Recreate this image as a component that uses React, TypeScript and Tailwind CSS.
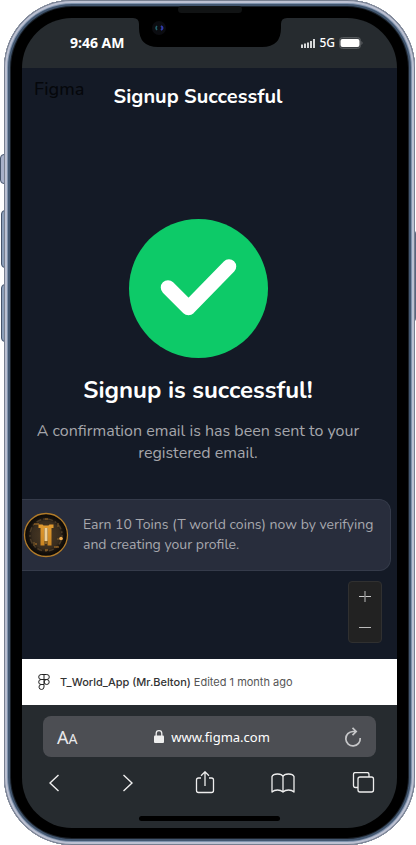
import React from "react";

function StatusBar() {
  return (
    <div className="relative flex h-[50px] items-center justify-between bg-[#262b2f] pl-12 pr-[34px] text-white">
      <span className="font-['Noto_Sans','Open_Sans',sans-serif] text-sm font-bold leading-5">9:46 AM</span>
      <div className="flex items-center gap-1">
        <svg viewBox="0 0 14 9" className="h-[9px] w-[14px]" fill="#d5d7d8" aria-hidden="true">
          <rect x="0" y="5.500" width="2" height="3.500" />
          <rect x="3" y="4.500" width="2" height="4.500" />
          <rect x="6" y="3.500" width="2" height="5.500" />
          <rect x="9" y="2" width="2" height="7" />
          <rect x="12" y="0" width="2" height="9" />
        </svg>
        <span className="font-['Noto_Sans','Open_Sans',sans-serif] text-xs font-medium leading-5">5G</span>
        <svg viewBox="0 0 24 12" className="h-3 w-6" aria-hidden="true">
          <rect x="0.5" y="0.5" width="21" height="11" rx="3" fill="#3a3e42" stroke="#55595c" />
          <rect x="1.500" y="2" width="19" height="8" rx="2" fill="#fff" />
          <path d="M22.500 4v4q1-1 1-2t-1-2" fill="#6a6d70" />
        </svg>
      </div>
      <svg viewBox="0 0 154 42" className="absolute -top-3 left-1/2 h-[42px] w-[154px] -translate-x-1/2" aria-hidden="true">
        <path d="M0 0H154V12Q148 12 148 18V22Q148 41 129 41H25Q6 41 6 22V18Q6 12 0 12Z" fill="#000" />
        <circle cx="26" cy="22" r="7" fill="#0b0c10" />
        <path d="M24 20q-2 2 0 4" stroke="#23606a" strokeWidth="1.500" fill="none" />
        <path d="M28 20q3 2 0 4" stroke="#303bac" strokeWidth="2" fill="none" />
      </svg>
    </div>
  );
}

function Coin() {
  return (
    <svg viewBox="0 0 46 46" className="h-[46px] w-[46px] shrink-0" role="img" aria-label="Toin">
      <defs>
        <radialGradient id="coin">
          <stop offset="0" stopColor="#4d3b25" />
          <stop offset="0.65" stopColor="#382c1e" />
          <stop offset="0.8" stopColor="#17120d" />
          <stop offset="1" stopColor="#080604" />
        </radialGradient>
        <linearGradient id="gold" x2="0" y2="1">
          <stop offset="0" stopColor="#e09a30" />
          <stop offset="1" stopColor="#c98522" />
        </linearGradient>
      </defs>
      <circle cx="23" cy="23" r="21.500" fill="url(#coin)" stroke="#b17b29" strokeWidth="1.300" />
      <circle cx="23" cy="23" r="16" fill="none" stroke="#4a3a26" strokeWidth="1.500" strokeDasharray="2 3 5 2" />
      <path d="M15.500 12.500h4l1 1h5l1-1h4v3.500h-2v17.500h-4V16h-3v17.500h-4V16h-2z" fill="url(#gold)" />
      <path d="M21.500 16h3v13h-3z" fill="#edcf96" />
      <path d="M21.500 29h3v3h-3z" fill="#8a6428" />
      <path d="M11 12h5M12 32h2M31 35h5M22 38h3M22 7h3" stroke="#b57928" />
      <path d="M11 30v4M35 11v4M34 27h6" stroke="#84602d" />
      <circle cx="38" cy="26.500" r="1.800" fill="#f0ad50" />
    </svg>
  );
}

function SuccessPage() {
  return (
    <main className="relative bg-[#141a26] font-['Nunito','Noto_Sans',sans-serif]">
      <span className="absolute left-3 top-[9px] text-lg font-medium leading-6 text-[#05070b]">Figma</span>
      <div className="pr-[23px] text-center">
        <h1 className="pt-[17px] text-xl font-bold leading-6 text-white">Signup Successful</h1>
        <svg viewBox="0 0 139 139" className="mx-auto mt-[110px] h-[139px] w-[139px]" role="img" aria-label="Success">
          <circle cx="69.500" cy="69.500" r="69.500" fill="#0dca68" />
          <path d="M39 68.500 59.500 89 100 47.500" fill="none" stroke="#fff" strokeWidth="14.500" strokeLinecap="round" strokeLinejoin="round" />
        </svg>
        <h2 className="mt-4 text-2xl font-bold leading-8 text-white">Signup is successful!</h2>
        <p className="mx-auto mt-[14px] max-w-[344px] text-base leading-[22px] text-[#a5a6ab]">
          A confirmation email is has been sent to your registered email.
        </p>
      </div>
      <section className="mr-[6px] mt-[35px] flex items-center gap-[14px] rounded-r-xl border-y border-r border-[#353b4a] bg-[#282d3c] py-3 pl-px pr-4">
        <Coin />
        <p className="text-sm leading-5 text-[#a7a8ae]">Earn 10 Toins (T world coins) now by verifying and creating your profile.</p>
      </section>
      <div className="flex justify-end pb-4 pr-[15px] pt-[10px]">
        <div className="flex w-[34px] flex-col rounded border border-[#303030] bg-[#222222]">
          <button type="button" aria-label="Zoom in" className="flex h-[30px] items-center justify-center">
            <svg viewBox="0 0 12 12" className="h-3 w-3" stroke="#ccc" aria-hidden="true"><path d="M0 5.500h12" /><path d="M6 0v11" stroke="#888" strokeWidth="1.500" /></svg>
          </button>
          <button type="button" aria-label="Zoom out" className="flex h-[30px] items-center justify-center">
            <svg viewBox="0 0 12 12" className="h-3 w-3" stroke="#bbb" aria-hidden="true"><path d="M0 6.500h12" /></svg>
          </button>
        </div>
      </div>
    </main>
  );
}

function FileBar() {
  return (
    <div className="flex h-[46px] items-center bg-white pl-4 font-['Inter',sans-serif] text-[11px] leading-4 text-[#333]">
      <svg viewBox="0 0 12 16" className="mr-[10px] h-4 w-3" fill="none" stroke="#222" aria-hidden="true">
        <path d="M6 .5H3.200a2.500 2.500 0 0 0 0 5H6zM6 .5h2.800a2.500 2.500 0 0 1 0 5H6M6 5.500H3.200a2.500 2.500 0 0 0 0 5H6zM6 10.500H3.200A2.500 2.500 0 1 0 6 13z" />
        <circle cx="8.700" cy="8" r="2.500" />
      </svg>
      <span className="font-medium">T_World_App (Mr.Belton)</span>
      <span className="ml-[3px] text-[#555]">Edited 1 month ago</span>
    </div>
  );
}

function BrowserBar() {
  return (
    <footer className="bg-[#262b2f] pb-[7px] pt-[11px] text-white">
      <div className="mx-[21px] flex h-[41px] items-center justify-between rounded-lg bg-[#4c4e53] px-[14px] font-['Noto_Sans',sans-serif]">
        <button type="button" aria-label="Text size" className="leading-6 text-[#e8e8ea]">
          <span className="text-lg">A</span><span className="text-sm">A</span>
        </button>
        <label className="ml-[6px] flex items-center gap-[7px]">
          <svg viewBox="0 0 10 13" className="h-[13px] w-[10px]" aria-hidden="true">
            <rect y="5.500" width="10" height="7.500" rx="1" fill="#eee" />
            <path d="M2.200 6V3.500a2.800 2.800 0 0 1 5.600 0V6" fill="none" stroke="#eee" strokeWidth="1.300" />
          </svg>
          <input type="text" aria-label="Address" defaultValue="www.figma.com" className="w-[102px] bg-transparent text-[13px] leading-5 outline-none" />
        </label>
        <button type="button" aria-label="Reload">
          <svg viewBox="0 0 18 20" className="h-5 w-[18px]" fill="none" stroke="#c6c7c9" strokeWidth="1.700" aria-hidden="true">
            <path d="M12 4.500H9A7.200 7.200 0 1 0 16.200 11M8.500 .8l3.700 3.700L8.500 8.200" />
          </svg>
        </button>
      </div>
      <nav aria-label="Browser" className="mt-3 flex h-7 items-center justify-between pl-[27px] pr-[22px]">
        <button type="button" aria-label="Back" className="mr-[8px]">
          <svg viewBox="0 0 10 18" className="h-[18px] w-[10px]" fill="none" stroke="#eee" strokeWidth="1.400" aria-hidden="true"><path d="M9.500 1 1 9l8.500 8" /></svg>
        </button>
        <button type="button" aria-label="Forward" className="mr-[6px]">
          <svg viewBox="0 0 10 18" className="h-[18px] w-[10px]" fill="none" stroke="#eee" strokeWidth="1.400" aria-hidden="true"><path d="m.5 1 8.500 8-8.500 8" /></svg>
        </button>
        <button type="button" aria-label="Share" className="mr-px">
          <svg viewBox="0 0 20 24" className="h-6 w-5" fill="none" stroke="#eee" strokeWidth="1.300" aria-hidden="true">
            <path d="M6 7H3.500Q1.500 7 1.500 9v10.500q0 2 2 2h13q2 0 2-2V9q0-2-2-2H14M10 15V.8M6 4.800l4-4 4 4" />
          </svg>
        </button>
        <button type="button" aria-label="Bookmarks">
          <svg viewBox="0 0 24 20" className="h-5 w-6" fill="none" stroke="#eee" strokeWidth="1.300" strokeLinejoin="round" aria-hidden="true">
            <path d="M12 3.500V19M12 3.500Q11 1 6.500 1T1 3.500V19q2-2 5.500-2t5.500 2q2-2 5.500-2T23 19V3.500Q22 1 17.500 1T12 3.500" />
          </svg>
        </button>
        <button type="button" aria-label="Tabs">
          <svg viewBox="0 0 24 22" className="h-[22px] w-6" fill="none" stroke="#eee" strokeWidth="1.300" aria-hidden="true">
            <rect x="7" y="5" width="15.500" height="15" rx="2" />
            <path d="M7 15.500H4.500q-2 0-2-2V2.500q0-2 2-2H16q2 0 2 2V5" />
          </svg>
        </button>
      </nav>
      <div className="mx-auto mt-[19px] h-[5px] w-[141px] rounded-full bg-black" />
    </footer>
  );
}

export default function App() {
  return (
    <div className="relative bg-white pl-1 pr-px">
      <span className="absolute left-0 top-[154px] h-[30px] w-[6px] rounded-l-sm border border-[#46556d] bg-[#a7b0c8]" />
      <span className="absolute left-px top-[210px] h-[58px] w-[6px] rounded-l-sm border border-[#46556d] bg-[#8c9fb9]" />
      <span className="absolute left-px top-[284px] h-[58px] w-[6px] rounded-l-sm border border-[#46556d] bg-[#8c9fb9]" />
      <span className="absolute right-0 top-[230px] h-[92px] w-[4px] rounded-r-sm border border-[#59657d] bg-[#7d88a8]" />
      <div className="relative rounded-[68px] bg-black px-[18px] pb-[17px] pt-[18px] shadow-[inset_0_0_0_1px_#777f90,inset_0_0_0_3px_#bcc1d2,inset_0_0_0_4px_#8093ad,inset_0_0_0_6px_#42566f,inset_0_0_0_7px_#1b222b]">
        <span className="absolute left-1/2 top-[6px] h-[7px] w-16 -translate-x-1/2 rounded-full bg-[#111314]" />
        <div className="overflow-hidden rounded-[50px]">
          <StatusBar />
          <SuccessPage />
          <FileBar />
          <BrowserBar />
        </div>
      </div>
    </div>
  );
}
